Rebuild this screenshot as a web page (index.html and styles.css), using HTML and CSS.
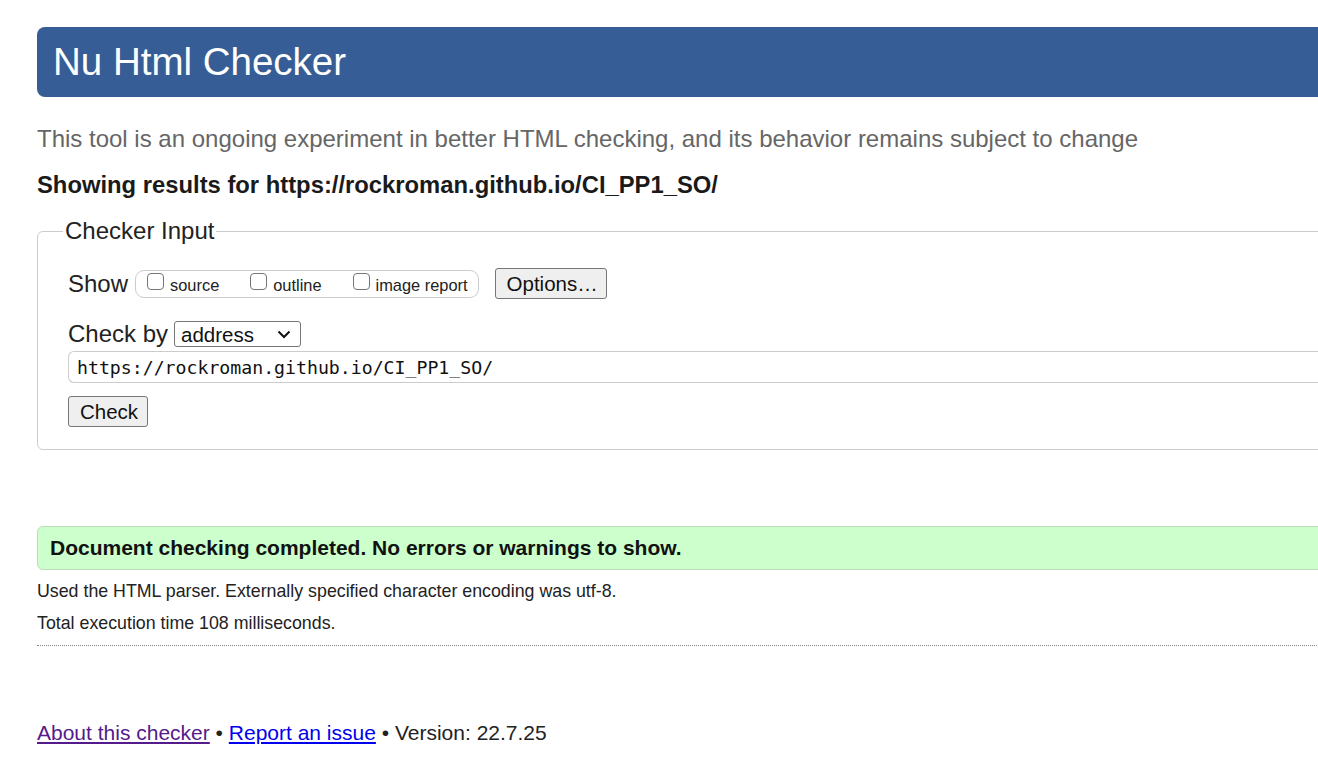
FILE: index.html
```html
<!DOCTYPE html>
<html lang="en">
<head>
<meta charset="utf-8">
<title>Nu Html Checker</title>
<link rel="stylesheet" href="styles.css">
</head>
<body>
<div class="page">
  <h1 class="banner">Nu Html Checker</h1>
  <p class="intro">This tool is an ongoing experiment in better HTML checking, and its behavior remains subject to change</p>
  <p class="results-for">Showing results for https://rockroman.github.io/CI_PP1_SO/</p>

  <fieldset class="input-box">
    <legend class="legend">Checker Input</legend>
    <div class="row show-row">
      <span class="label">Show</span>
      <span class="check-group">
        <label class="opt"><input type="checkbox" class="cb"><span>source</span></label>
        <label class="opt"><input type="checkbox" class="cb"><span>outline</span></label>
        <label class="opt"><input type="checkbox" class="cb"><span>image report</span></label>
      </span>
      <button class="btn options-btn" type="button">Options…</button>
    </div>
    <div class="row by-row">
      <span class="label">Check by</span>
      <span class="select-wrap">
        <select class="select"><option>address</option></select>
        <svg class="chevron" width="14" height="9" viewBox="0 0 14 9"><path d="M1.5 1.5 L7 7 L12.5 1.5" fill="none" stroke="#111" stroke-width="2"/></svg>
      </span>
    </div>
    <div class="url-box">https://rockroman.github.io/CI_PP1_SO/</div>
    <div class="row">
      <button class="btn check-btn" type="button">Check</button>
    </div>
  </fieldset>

  <div class="success">Document checking completed. No errors or warnings to show.</div>
  <p class="details">Used the HTML parser. Externally specified character encoding was utf-8.</p>
  <p class="details">Total execution time 108 milliseconds.</p>
  <hr class="dotted">

  <p class="footer"><a class="visited" href="#about">About this checker</a> • <a class="link" href="#issue">Report an issue</a> • Version: 22.7.25</p>
</div>
</body>
</html>
```

FILE: styles.css
```css
html, body {
  margin: 0;
  padding: 0;
  background: #fff;
  overflow: hidden;
}
body {
  padding: 27px 0 0 37px;
  font-family: "Liberation Sans", Arial, sans-serif;
  color: #222;
}
.page {
  width: 1400px;
}
.banner {
  margin: 0;
  height: 70px;
  box-sizing: border-box;
  padding-left: 16px;
  display: flex;
  align-items: center;
  background: #365d95;
  color: #fff;
  font-size: 38.5px;
  font-weight: normal;
  border-radius: 8px;
}
.intro {
  margin: 27px 0 0;
  line-height: 30px;
  font-size: 24px;
  color: #666;
}
.results-for {
  margin: 16px 0 0;
  line-height: 30px;
  font-size: 23.8px;
  font-weight: bold;
  color: #1a1a1a;
}
.input-box {
  margin: 16px 0 0;
  padding: 0 0 22px 30px;
  border: 1px solid #ccc;
  border-radius: 6px;
  min-width: 0;
}
.legend {
  margin-left: -5px;
  padding: 0 2px;
  line-height: 30px;
  font-size: 24px;
  color: #222;
}
.row {
  display: flex;
  align-items: center;
}
.label {
  font-size: 24px;
  color: #222;
}
.show-row {
  margin-top: 22px;
  height: 31px;
}
.check-group {
  margin-left: 7px;
  height: 28px;
  box-sizing: border-box;
  border: 1px solid #ccc;
  border-radius: 9px;
  padding: 0 10px 0 11px;
  display: flex;
  align-items: center;
  gap: 31px;
}
.opt {
  display: flex;
  align-items: center;
  gap: 6px;
  font-size: 16.4px;
  color: #222;
}
.opt span {
  position: relative;
  top: 2px;
}
.cb {
  appearance: none;
  -webkit-appearance: none;
  margin: 0;
  width: 17px;
  height: 17px;
  border: 1px solid #767676;
  border-radius: 4px;
  background: #fff;
  position: relative;
  top: -2px;
}
.btn {
  font-family: "Liberation Sans", Arial, sans-serif;
  font-size: 20.5px;
  color: #111;
  background: #efefef;
  border: 1px solid #767676;
  border-radius: 3px;
  height: 31px;
  padding: 0 11px;
  margin: 0;
}
.options-btn {
  margin-left: 16px;
  width: 112px;
}
.by-row {
  margin-top: 22px;
  height: 26px;
}
.select-wrap {
  position: relative;
  margin-left: 6px;
  display: inline-flex;
}
.select {
  appearance: none;
  -webkit-appearance: none;
  width: 127px;
  height: 26px;
  box-sizing: border-box;
  border: 1px solid #767676;
  border-radius: 3px;
  background: #fff;
  padding: 0 0 0 6px;
  font-family: "Liberation Sans", Arial, sans-serif;
  font-size: 20.5px;
  color: #111;
}
.chevron {
  position: absolute;
  right: 10px;
  top: 9px;
  pointer-events: none;
}
.url-box {
  margin-top: 4px;
  height: 32px;
  box-sizing: border-box;
  border: 1px solid #ccc;
  border-right: none;
  border-radius: 6px 0 0 6px;
  padding-left: 8px;
  display: flex;
  align-items: center;
  font-family: "DejaVu Sans Mono", "Liberation Mono", monospace;
  font-size: 18.2px;
  color: #111;
}
.check-btn {
  margin-top: 13px;
  width: 80px;
}
.success {
  margin-top: 76px;
  height: 44px;
  box-sizing: border-box;
  background: #ccffcc;
  border: 1px solid #bbdcbb;
  border-radius: 6px;
  padding-left: 12px;
  display: flex;
  align-items: center;
  font-size: 21px;
  font-weight: bold;
  color: #111;
}
.details {
  margin: 10px 0 0;
  line-height: 22px;
  font-size: 17.8px;
  color: #222;
}
.details + .details {
  margin-top: 10px;
}
.dotted {
  margin: 11px 0 0;
  border: none;
  border-top: 1px dotted #888;
  height: 0;
}
.footer {
  margin: 74px 0 0;
  line-height: 26px;
  font-size: 21px;
  color: #222;
}
.visited {
  color: #551a8b;
}
.link {
  color: #0000ee;
}
```
